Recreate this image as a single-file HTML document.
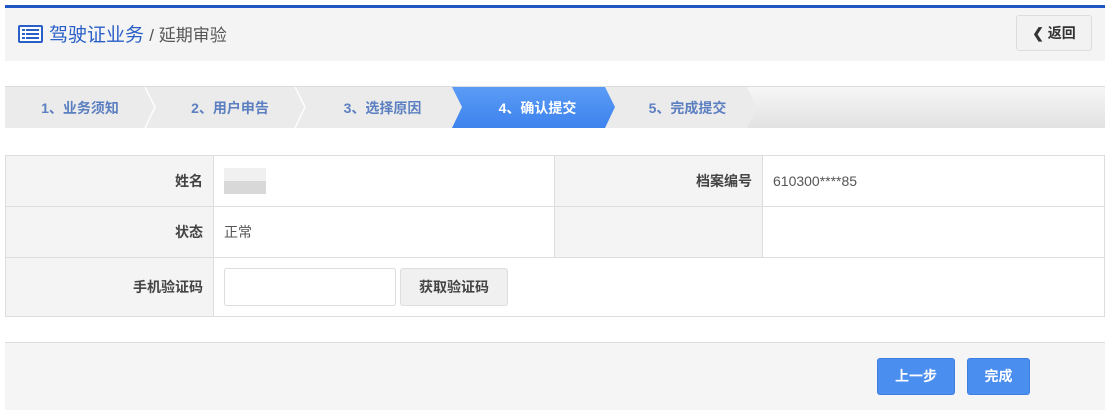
<!DOCTYPE html>
<html><head><meta charset="utf-8"><style>
*{margin:0;padding:0;box-sizing:border-box}
body{width:1110px;height:417px;background:#fff;font-family:"Liberation Sans","Noto Sans CJK SC",sans-serif;position:relative;overflow:hidden;color:#555}
.abs{position:absolute}
.topline{left:5px;top:5px;width:1100px;height:3px;background:#1e56c4}
.hdr{left:5px;top:8px;width:1100px;height:53px;background:#f4f4f4}
.title{left:17px;top:22px;font-size:19px;color:#2a5fc7;line-height:28px}
.title span{color:#555;font-size:17px}
.back{left:1016px;top:15px;width:76px;height:36px;border:1px solid #ddd;border-radius:3px;background:#f2f2f2;font-size:14px;font-weight:bold;color:#333;line-height:34px;text-align:center}
.steps{left:5px;top:86px;width:1100px;height:42px;border-top:1px solid #ddd;background:linear-gradient(#f6f6f6,#e2e2e2)}
.st{position:absolute;top:88px;height:41px;line-height:41px;font-size:14px;font-weight:bold;color:#5b7fc0;text-align:center}
table{position:absolute;left:5px;top:155px;width:1100px;border-collapse:collapse;font-size:14px}
td{border:1px solid #ddd;color:#555}
td.l{background:#f4f4f4;text-align:right;padding-right:10px;width:208px;font-weight:bold;color:#444}
td.v{padding-left:10px}
.foot{left:5px;top:342px;width:1100px;height:68px;background:#f5f5f5;border-top:1px solid #ddd}
.btn{position:absolute;top:358px;height:37px;background:#4a8ef0;border:1px solid #3d7fe0;border-radius:3px;color:#fff;font-weight:bold;font-size:14px;line-height:35px;text-align:center}
</style></head><body>
<div class="abs topline"></div>
<div class="abs hdr"></div>
<div class="abs title"><svg width="27" height="20" viewBox="0 0 27 20" style="vertical-align:-3px;margin-right:5px"><rect x="1" y="1" width="25" height="18" rx="2" fill="#2a5fc7"/><rect x="3" y="3" width="21" height="14" fill="#fff"/><rect x="5" y="5" width="3" height="2" fill="#2a5fc7"/><rect x="9" y="5" width="13" height="2" fill="#2a5fc7"/><rect x="5" y="9" width="3" height="2" fill="#2a5fc7"/><rect x="9" y="9" width="13" height="2" fill="#2a5fc7"/><rect x="5" y="13" width="3" height="2" fill="#2a5fc7"/><rect x="9" y="13" width="13" height="2" fill="#2a5fc7"/></svg>驾驶证业务 <span>/ 延期审验</span></div>
<div class="abs back">&#10094; 返回</div>
<div class="abs steps"></div>
<div style="position:absolute;left:5px;top:87px;width:752px;height:41px;background:#ebebeb;clip-path:polygon(0 0,742px 0,752px 20px,742px 41px,0 41px)"></div>
<svg style="position:absolute;left:0;top:87px" width="760" height="41"><g stroke="#fff" stroke-width="1.5" fill="none" opacity=".9"><path d="M145 0 L155 20 L145 41"/><path d="M295 0 L305 20 L295 41"/></g></svg>
<div style="position:absolute;left:452px;top:87px;width:163px;height:41px;background:linear-gradient(#5a9cf5,#3e82ee);clip-path:polygon(0 0,153px 0,163px 20px,153px 41px,0 41px,10px 20px)"></div>
<div class="st" style="left:5px;width:150px">1、业务须知</div>
<div class="st" style="left:155px;width:150px">2、用户申告</div>
<div class="st" style="left:305px;width:155px">3、选择原因</div>
<div class="st" style="left:460px;width:155px;color:#fff">4、确认提交</div>
<div class="st" style="left:610px;width:155px">5、完成提交</div>
<table>
<tr style="height:51px"><td class="l">姓名</td><td class="v" style="width:341px"><div style="width:42px;height:26px;background:linear-gradient(#f0f0f0 50%,#d8d8d8 50%)"></div></td><td class="l">档案编号</td><td class="v">610300****85</td></tr>
<tr style="height:51px"><td class="l">状态</td><td class="v">正常</td><td class="l"></td><td class="v"></td></tr>
<tr style="height:59px"><td class="l">手机验证码</td><td class="v" colspan="3"><span style="display:inline-block;vertical-align:middle;width:172px;height:38px;border:1px solid #ddd;border-radius:3px"></span><span style="display:inline-block;vertical-align:middle;margin-left:4px;width:108px;height:38px;border:1px solid #ddd;border-radius:3px;background:#f0f0f0;text-align:center;line-height:36px;font-weight:bold;color:#444">获取验证码</span></td></tr>
</table>
<div class="abs foot"></div>
<div class="btn" style="left:877px;width:78px">上一步</div>
<div class="btn" style="left:967px;width:63px">完成</div>
</body></html>
